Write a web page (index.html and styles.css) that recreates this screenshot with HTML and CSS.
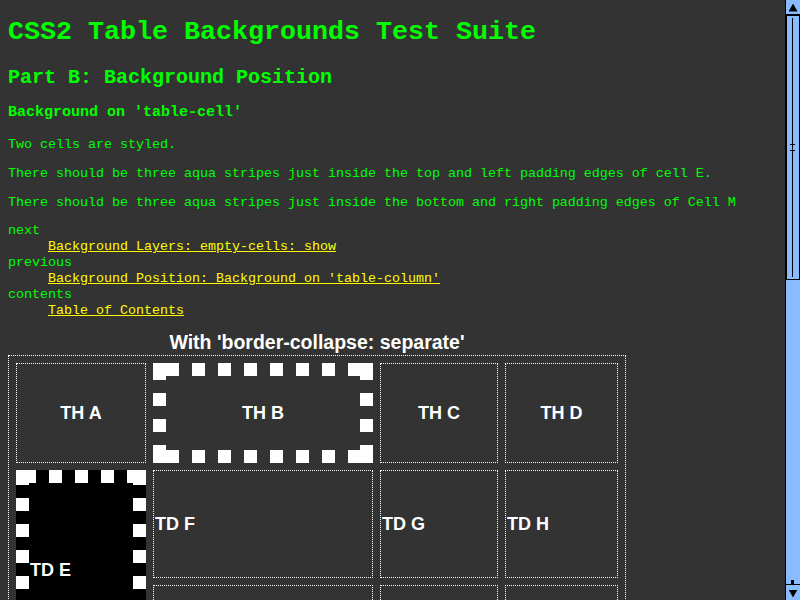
FILE: index.html
```html
<!DOCTYPE html>
<html lang="en">
<head>
<meta charset="utf-8">
<title>CSS2 Table Backgrounds Test Suite</title>
<link rel="stylesheet" href="styles.css">
</head>
<body>
<h1>CSS2 Table Backgrounds Test Suite</h1>
<h2>Part B: Background Position</h2>
<h3>Background on 'table-cell'</h3>
<p class="first">Two cells are styled.</p>
<p>There should be three aqua stripes just inside the top and left padding edges of cell E.</p>
<p>There should be three aqua stripes just inside the bottom and right padding edges of Cell M</p>
<dl class="nav">
  <dt>next</dt>
  <dd><a href="#">Background Layers: empty-cells: show</a></dd>
  <dt>previous</dt>
  <dd><a href="#">Background Position: Background on 'table-column'</a></dd>
  <dt>contents</dt>
  <dd><a href="#">Table of Contents</a></dd>
</dl>
<table class="grid">
  <caption>With 'border-collapse: separate'</caption>
  <tr class="r1">
    <th class="ca">TH A</th>
    <th class="cb dashed-b">TH B</th>
    <th class="cc">TH C</th>
    <th class="cd">TH D</th>
  </tr>
  <tr class="r2">
    <td class="dashed-e" rowspan="2">TD E</td>
    <td>TD F</td>
    <td>TD G</td>
    <td>TD H</td>
  </tr>
  <tr class="r3">
    <td>TD I</td>
    <td>TD J</td>
    <td>TD K</td>
  </tr>
  <tr class="r4">
    <td>TD L</td>
    <td>TD M</td>
    <td>TD N</td>
    <td>TD O</td>
  </tr>
</table>

<div class="scrollbar" aria-hidden="true">
  <div class="sb-btn sb-up"><span class="tri tri-up"></span></div>
  <div class="sb-thumb"><span class="sb-line"></span><span class="sb-grip"></span></div>
  <div class="sb-track"></div>
  <div class="sb-btn sb-down"><span class="tri tri-down"></span></div>
</div>
</body>
</html>
```

FILE: styles.css
```css
html {
  overflow: hidden;
  background: #333333;
}

body {
  margin: 0;
  padding: 17px 8px 8px;
  background: #333333;
  color: #00ff00;
  font-family: "Liberation Mono", "Courier New", monospace;
  font-size: 13.333px;
}

h1 {
  font-size: 26.667px;
  line-height: 30px;
  margin: 0;
}

h2 {
  font-size: 20px;
  line-height: 23px;
  margin: 19px 0 0;
}

h3 {
  font-size: 15px;
  line-height: 17px;
  margin: 15px 0 0;
}

p {
  line-height: 15px;
  margin: 14px 0 0;
}

p.first {
  margin-top: 16px;
}

.nav {
  margin: 13px 0 0;
  line-height: 16px;
}

.nav dt {
  margin: 0;
}

.nav dd {
  margin: 0 0 0 40px;
}

.nav a {
  color: #ffff00;
  text-decoration: underline;
}

/* table */
.grid {
  margin-top: 13px;
  width: 618px;
  table-layout: fixed;
  border: 1px dotted #ffffff;
  border-spacing: 7px;
}

.grid caption {
  font-family: "Liberation Sans", Arial, sans-serif;
  font-weight: bold;
  font-size: 19.5px;
  line-height: 21px;
  padding-bottom: 2px;
  color: #ffffff;
  text-align: center;
}

.grid th,
.grid td {
  box-sizing: border-box;
  border: 1px dotted #ffffff;
  padding: 1px;
  color: #ffffff;
  font-family: "Liberation Sans", Arial, sans-serif;
  font-weight: bold;
  font-size: 18px;
  line-height: 21px;
  vertical-align: middle;
}

.grid th {
  text-align: center;
}

.grid td {
  text-align: left;
}

.ca { width: 130px; }
.cb { width: 220px; }
.cc { width: 118px; }
.cd { width: 113px; }

.r1 { height: 100px; }
.r2 { height: 108px; }
.r3 { height: 85px; }
.r4 { height: 100px; }

/* thick square-dashed borders drawn as background layers */
.grid .dashed-b,
.grid .dashed-e {
  border: 13px solid transparent;
  background-origin: border-box;
  background-clip: border-box;
  background-repeat: no-repeat;
  background-size:
    13px 13px, 13px 13px, 13px 13px, 13px 13px,
    100% 13px, 100% 13px, 13px 100%, 13px 100%;
  background-position:
    left top, right top, left bottom, right bottom,
    left top, left bottom, left top, right top;
}

.grid .dashed-b {
  background-color: transparent;
  background-image:
    linear-gradient(#fff, #fff),
    linear-gradient(#fff, #fff),
    linear-gradient(#fff, #fff),
    linear-gradient(#fff, #fff),
    repeating-linear-gradient(to right, transparent 0 13px, #fff 13px 26px),
    repeating-linear-gradient(to right, transparent 0 13px, #fff 13px 26px),
    repeating-linear-gradient(to bottom, transparent 0 4px, #fff 4px 17px, transparent 17px 26px),
    repeating-linear-gradient(to bottom, transparent 0 4px, #fff 4px 17px, transparent 17px 26px);
}

.grid .dashed-e {
  background-color: #000000;
  background-image:
    linear-gradient(#fff, #fff),
    linear-gradient(#fff, #fff),
    linear-gradient(#fff, #fff),
    linear-gradient(#fff, #fff),
    repeating-linear-gradient(to right, transparent 0 7px, #fff 7px 20px, transparent 20px 26px),
    repeating-linear-gradient(to right, transparent 0 7px, #fff 7px 20px, transparent 20px 26px),
    repeating-linear-gradient(to bottom, transparent 0 2px, #fff 2px 15px, transparent 15px 26px),
    repeating-linear-gradient(to bottom, transparent 0 2px, #fff 2px 15px, transparent 15px 26px);
}

/* fake scrollbar */
.scrollbar {
  position: fixed;
  top: 0;
  right: 0;
  width: 14px;
  height: 600px;
  border-left: 1px solid #000000;
  background: #88bbff;
  display: flex;
  flex-direction: column;
}

.sb-btn {
  flex: none;
  display: flex;
  align-items: center;
  justify-content: center;
}

.sb-up {
  height: 14px;
  border-bottom: 2px solid #000000;
}

.sb-down {
  height: 15px;
  border-top: 1px solid #000000;
  position: relative;
}

.sb-down::before {
  content: "";
  position: absolute;
  top: -5px;
  left: 5px;
  width: 3px;
  height: 4px;
  background: #000000;
}

.tri {
  width: 9px;
  height: 8px;
  background: #000000;
}

.tri-up {
  clip-path: polygon(50% 0, 100% 100%, 0 100%);
  margin-top: 1px;
}

.tri-down {
  clip-path: polygon(0 0, 100% 0, 50% 100%);
  margin-top: 2px;
}

.sb-thumb {
  flex: none;
  height: 263px;
  border: 1px solid #000000;
  border-top: 0;
  position: relative;
}

.sb-line {
  display: block;
  width: 1px;
  height: 259px;
  margin: 2px 0 0 5px;
  background: #000000;
}

.sb-grip {
  position: absolute;
  top: 128px;
  left: 3px;
  width: 5px;
  height: 5px;
  border-top: 1px solid #000000;
  border-bottom: 1px solid #000000;
}

.sb-track {
  flex: 1;
}
```
